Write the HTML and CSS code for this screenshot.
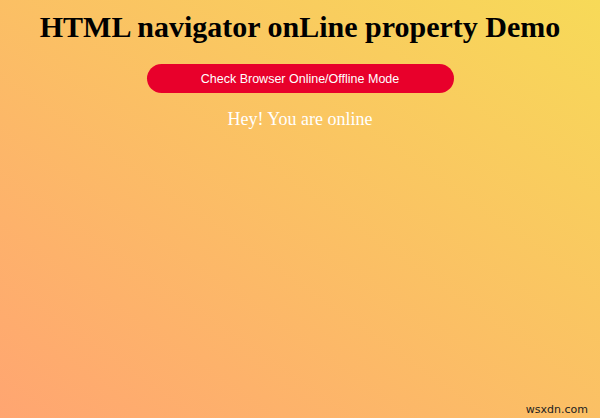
FILE: index.html
```html
<!DOCTYPE html>
<html>
<head>
<meta charset="utf-8">
<link rel="stylesheet" href="styles.css">
</head>
<body>
<div class="page">
  <h1 class="title">HTML navigator onLine property Demo</h1>
  <button class="check-btn">Check Browser Online/Offline Mode</button>
  <p class="status">Hey! You are online</p>
</div>
<div class="watermark">wsxdn.com</div>
</body>
</html>
```
FILE: styles.css
```css
html, body {
  margin: 0;
  padding: 0;
  height: 100%;
}
body {
  background: linear-gradient(to top right, #ffa571, #f7da58);
  font-family: "Liberation Serif", "Times New Roman", serif;
  overflow: hidden;
  position: relative;
}
.page {
  display: flex;
  flex-direction: column;
  align-items: center;
  padding-top: 10px;
}
.title {
  margin: 0;
  font-size: 30px;
  font-weight: bold;
  color: #000;
  line-height: 34px;
}
.check-btn {
  margin-top: 20px;
  width: 307px;
  height: 29px;
  border: none;
  border-radius: 15px;
  background: #e8002b;
  color: #fff;
  font-family: "Liberation Sans", Arial, sans-serif;
  font-size: 12.5px;
}
.status {
  margin: 15px 0 0;
  color: #fff;
  font-size: 18px;
  line-height: 22px;
}
.watermark {
  position: absolute;
  right: 12px;
  bottom: 2px;
  font-family: "DejaVu Sans", sans-serif;
  font-size: 11px;
  color: #222;
}
```
